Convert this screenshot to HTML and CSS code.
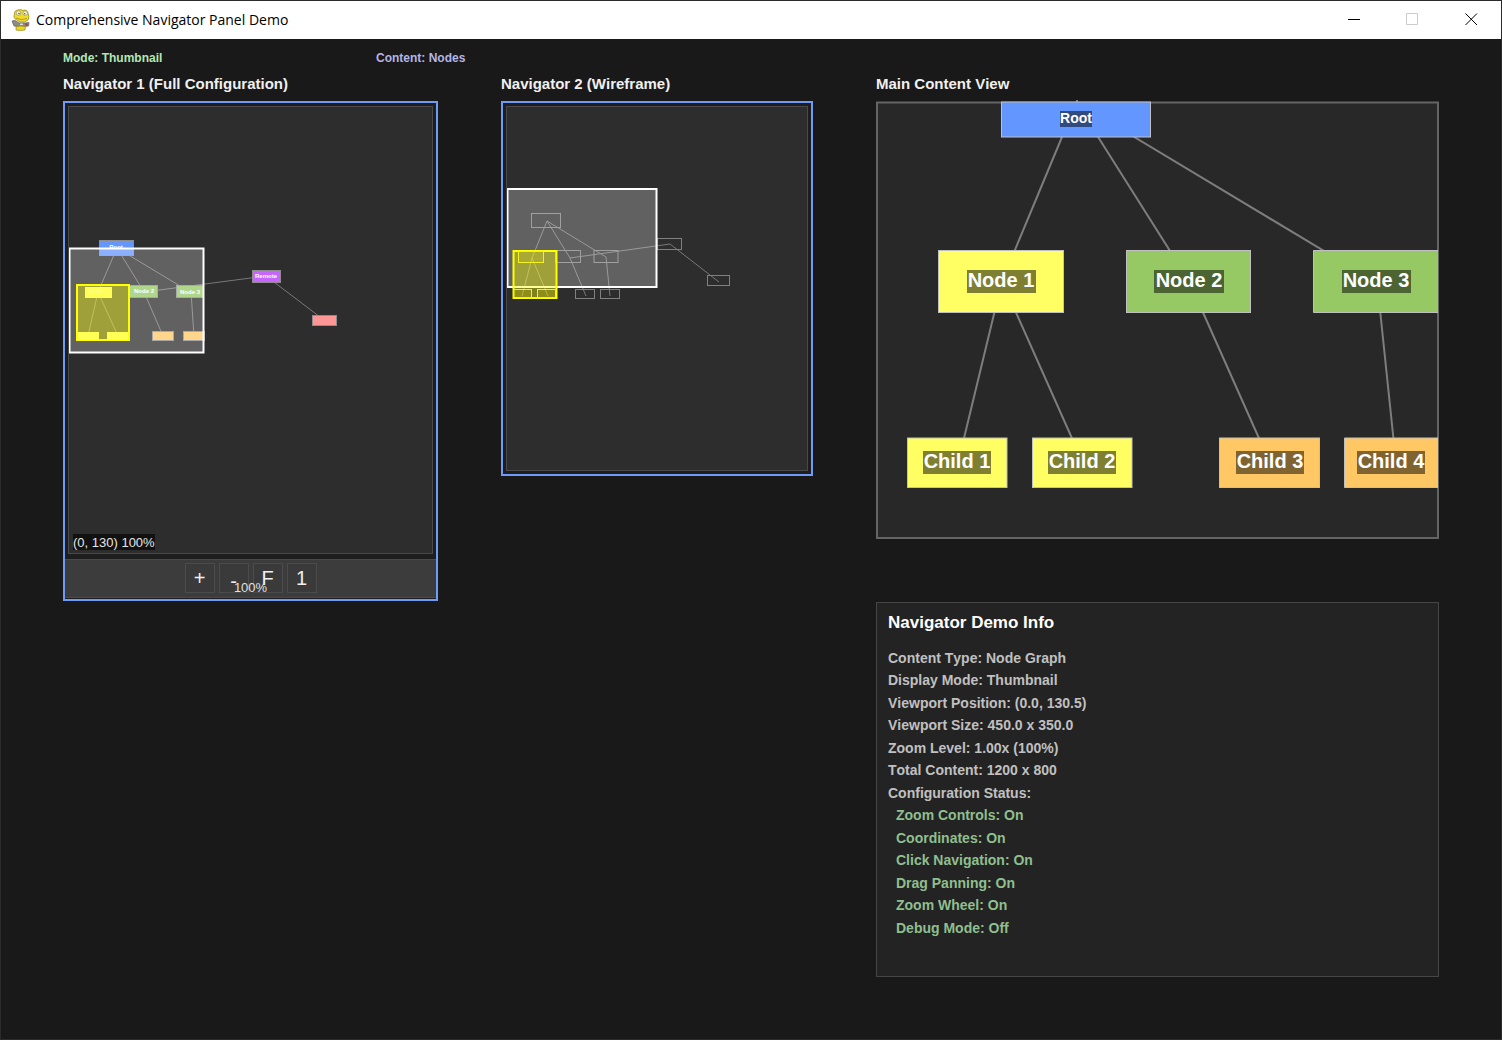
FILE: index.html
```html
<!DOCTYPE html>
<html lang="en">
<head>
<meta charset="utf-8">
<meta name="viewport" content="width=device-width, initial-scale=1">
<title>Comprehensive Navigator Panel Demo</title>
<link rel="stylesheet" href="styles.css">
</head>
<body>
<div class="window">
  <header class="titlebar">
    <svg class="app-icon" viewBox="0 0 20 22" aria-hidden="true">
      <path d="M5 10.500 Q2 9 3.500 5 Q3 1.500 7 1 Q10 0 12 1.500 Q16 0 17 4 Q19 8 17 11 Q14 14 9 13 Z" fill="#f0dc28" stroke="#8a7c1c" stroke-width=".7"/>
      <circle cx="7.500" cy="4" r="2.300" fill="#f7f7ea" stroke="#8c8450" stroke-width=".6"/>
      <circle cx="14.200" cy="4.200" r="2.300" fill="#f7f7ea" stroke="#8c8450" stroke-width=".6"/>
      <circle cx="8" cy="4.500" r=".8" fill="#555"/>
      <circle cx="13.800" cy="4.700" r=".8" fill="#555"/>
      <path d="M5 9 Q10 12 16 9.500" fill="none" stroke="#a08d14" stroke-width=".8"/>
      <path d="M1 12 L4 11.500 L8 14 L14 14 L18 13.500 L17.500 17 L13 17.500 L8 17.500 L3 17 Z" fill="#8d8d88" stroke="#5c5c58" stroke-width=".7"/>
      <path d="M9 14.500 h3 v1.500 h-3z" fill="#ddd"/>
      <circle cx="15.500" cy="15.500" r="1.200" fill="#b03a3a"/>
      <path d="M5 17.500 Q10 16.500 14.500 17.500 L14 21 Q9 22 5 21 Z" fill="#ecd51f" stroke="#8a7c1c" stroke-width=".6"/>
    </svg>
    <span class="window-title">Comprehensive Navigator Panel Demo</span>
    <div class="window-controls">
      <button type="button" aria-label="Minimize"><svg viewBox="0 0 13 13"><path d="M1 6.500H13"/></svg></button>
      <button type="button" aria-label="Maximize" disabled><svg viewBox="0 0 13 13"><path d="M.5 .5H11.500V11.500H.5Z"/></svg></button>
      <button type="button" aria-label="Close"><svg viewBox="0 0 13 13"><path d="M.5 .5 L12 12 M12 .5 L.5 12"/></svg></button>
    </div>
  </header>

  <main class="canvas">
    <div class="status">
      <span class="status-mode">Mode: Thumbnail</span>
      <span class="status-content">Content: Nodes</span>
    </div>

    <div class="columns">
      <section class="column">
        <h2>Navigator 1 (Full Configuration)</h2>
        <div class="navigator">
          <div class="map">
            <svg viewBox="69 107 363 446" role="img" aria-label="Thumbnail node map">
              <g class="edges">
                <path d="M117 248L98 292M117 248L144 292M117 248L190 292M144 292L266 276L324 320M98 292L88 336M98 292L118 336M144 292L163 336M191 292L194 336"/>
              </g>
              <g class="thumbs">
                <rect class="blue" x="99.500" y="240.500" width="34" height="15"/>
                <rect class="green" x="129.500" y="285.500" width="28" height="12"/>
                <rect class="green" x="176.500" y="285.500" width="27" height="12"/>
                <rect class="orange" x="152.500" y="331.500" width="21" height="9"/>
                <rect class="orange" x="183.500" y="331.500" width="21" height="9"/>
                <rect class="purple" x="252.500" y="270.500" width="28" height="12"/>
                <rect class="red" x="312.500" y="315.500" width="24" height="10"/>
              </g>
              <g class="thumb-text">
                <text x="116" y="249">Root</text>
                <text x="144" y="293">Node 2</text>
                <text x="190" y="294">Node 3</text>
                <text x="266" y="278">Remote</text>
              </g>
              <rect class="viewport" x="69.500" y="248.500" width="134" height="104"/>
              <rect class="selection" x="77" y="285" width="52" height="55"/>
              <g class="picked">
                <rect x="85" y="287" width="27" height="11"/>
                <rect x="78" y="332" width="21" height="8"/>
                <rect x="107" y="332" width="21" height="8"/>
              </g>
              <g class="thumb-text faint"><text x="98" y="293">Node 1</text></g>
            </svg>
            <span class="coords">(0, 130) 100%</span>
          </div>
          <div class="toolbar">
            <button type="button" aria-label="Zoom in">+</button>
            <button type="button" class="zoom-out" aria-label="Zoom out">-</button>
            <button type="button" aria-label="Fit">F</button>
            <button type="button" aria-label="Actual size">1</button>
            <span class="zoom-value">100%</span>
          </div>
        </div>
      </section>

      <section class="column">
        <h2>Navigator 2 (Wireframe)</h2>
        <div class="navigator">
          <div class="map">
            <svg viewBox="507 107 300 363" role="img" aria-label="Wireframe node map">
              <g class="edges">
                <path d="M547 221L532 258M547 221L570 258M547 221L606 257M570 258L670 244L719 282M532 258L522 296M532 258L548 296M570 258L586 296M606 257L610 296"/>
              </g>
              <g class="frames">
                <rect x="531.500" y="213.500" width="29" height="14"/>
                <rect x="518.500" y="250.500" width="25" height="12"/>
                <rect x="555.500" y="250.500" width="25" height="12"/>
                <rect x="594" y="250.500" width="24" height="12"/>
                <rect x="657.500" y="238.500" width="24" height="11"/>
                <rect x="707.500" y="275.500" width="22" height="10"/>
                <rect x="575.500" y="289.500" width="19" height="9"/>
                <rect x="600.500" y="289.500" width="19" height="9"/>
              </g>
              <rect class="viewport" x="507.500" y="189" width="149" height="98"/>
              <rect class="selection" x="513.500" y="251" width="43" height="47"/>
              <g class="picked-frames">
                <rect x="518.500" y="251.500" width="25" height="11"/>
                <rect x="513.500" y="289.500" width="18" height="8"/>
                <rect x="537.500" y="289.500" width="18" height="8"/>
              </g>
            </svg>
          </div>
        </div>
      </section>

      <section class="column">
        <h2>Main Content View</h2>
        <svg class="content-view" viewBox="876 101 563 438" role="img" aria-label="Node graph">
          <rect class="view-frame" x="877" y="102.500" width="561" height="435.500"/>
          <path class="links" d="M1077 100V102M1077 101L1002 281M1076 102L1189 281M1076 102L1374 281M1002 281L958 463M1002 281L1083 463M1189 281L1270 463M1377 281L1396 463"/>
          <g class="nodes">
            <rect class="blue" x="1001.500" y="102" width="149" height="35"/>
            <rect class="yellow" x="938.500" y="250.500" width="125" height="62"/>
            <rect class="green" x="1126.500" y="250.500" width="124" height="62"/>
            <path class="green" d="M1438 250.500H1313.500V312.500H1438"/>
            <rect class="yellow" x="907.500" y="438" width="99.500" height="49.500"/>
            <rect class="yellow" x="1032.500" y="438" width="99.500" height="49.500"/>
            <rect class="orange" x="1219.500" y="438" width="100" height="49.500"/>
            <path class="orange" d="M1438 438H1344.500V487.500H1438"/>
          </g>
          <g class="label-backs">
            <rect x="1060" y="111" width="32" height="16"/>
            <rect x="967" y="270" width="69" height="23"/>
            <rect x="1154" y="270" width="70" height="23"/>
            <rect x="1342" y="270" width="69" height="23"/>
            <rect x="923" y="451" width="68" height="23"/>
            <rect x="1048" y="451" width="68" height="23"/>
            <rect x="1236" y="451" width="68" height="23"/>
            <rect x="1357" y="451" width="68" height="23"/>
          </g>
          <g class="labels">
            <text class="small" x="1076" y="123">Root</text>
            <text x="1001" y="287">Node 1</text>
            <text x="1189" y="287">Node 2</text>
            <text x="1376" y="287">Node 3</text>
            <text x="957" y="468">Child 1</text>
            <text x="1082" y="468">Child 2</text>
            <text x="1270" y="468">Child 3</text>
            <text x="1391" y="468">Child 4</text>
          </g>
        </svg>

        <div class="info">
          <h3>Navigator Demo Info</h3>
          <ul>
            <li>Content Type: Node Graph</li>
            <li>Display Mode: Thumbnail</li>
            <li>Viewport Position: (0.0, 130.5)</li>
            <li>Viewport Size: 450.0 x 350.0</li>
            <li>Zoom Level: 1.00x (100%)</li>
            <li>Total Content: 1200 x 800</li>
            <li>Configuration Status:</li>
            <li class="on">Zoom Controls: On</li>
            <li class="on">Coordinates: On</li>
            <li class="on">Click Navigation: On</li>
            <li class="on">Drag Panning: On</li>
            <li class="on">Zoom Wheel: On</li>
            <li class="on">Debug Mode: Off</li>
          </ul>
        </div>
      </section>
    </div>
  </main>
</div>
</body>
</html>
```
FILE: styles.css
```css
* { box-sizing: border-box; }

body {
  margin: 0;
  background: #191919;
  color: #f0f0f0;
  font-family: "Liberation Sans", Arial, sans-serif;
  font-kerning: none;
}

.window {
  display: flex;
  flex-direction: column;
  min-height: 100vh;
  border: 1px solid #2b2b2b;
}

.titlebar {
  display: flex;
  align-items: center;
  height: 38px;
  padding-left: 10px;
  background: #fff;
  color: #000;
}

.app-icon { width: 20px; height: 22px; }

.window-title {
  margin-left: 5px;
  padding-bottom: 1px;
  font: 14px/20px "Open Sans", "Noto Sans", sans-serif;
}

.window-controls { display: flex; margin-left: auto; height: 100%; }

.window-controls button {
  display: grid;
  place-items: center;
  width: 59px;
  padding: 0 0 1px;
  border: 0;
  background: none;
}

.window-controls svg {
  width: 13px;
  height: 13px;
  fill: none;
  stroke: #000;
  stroke-width: 1;
}

.window-controls button:disabled svg { stroke: #ccc; }

.canvas { flex: 1; padding: 11px 62px 62px; }

.status {
  display: flex;
  font-size: 12px;
  font-weight: bold;
  line-height: 16px;
}

.status-mode { width: 313px; color: #b4e6b4; }
.status-content { color: #b4b4e6; }

.columns {
  display: grid;
  grid-template-columns: 375fr 312fr 563fr;
  gap: 63px;
  align-items: start;
  margin-top: 8px;
}

.column { min-width: 0; }

h2 {
  margin: 0 0 7px;
  font-size: 15px;
  line-height: 20px;
  white-space: nowrap;
}

.navigator {
  padding: 3px 0;
  border: 2px solid #6f9af5;
  background: #1e1e1e;
}

.map {
  position: relative;
  margin: 0 3px;
  border: 1px solid #4a4a4a;
  background: #2d2d2d;
}

.map svg, .content-view { display: block; width: 100%; height: auto; }

.edges { fill: none; stroke: #787878; stroke-width: 1; }
.thumbs rect { stroke: #8c8c8c; stroke-width: 1; }
.thumb-text { fill: #fff; font-size: 6px; font-weight: bold; text-anchor: middle; }
.faint { opacity: .25; }
.frames rect { fill: none; stroke: #808080; }
.viewport { fill: #fff; fill-opacity: .25; stroke: #fff; stroke-width: 2; }
.selection { fill: #ff0; fill-opacity: .4; stroke: #ff0; stroke-width: 2; }
.picked { fill: #ffff55; }
.picked-frames { fill: #ff0; fill-opacity: .1; stroke: #f4f41c; }

.coords {
  position: absolute;
  left: 4px;
  bottom: 3px;
  padding-top: 1px;
  background: #111;
  color: #e6e6e6;
  font-size: 13px;
  line-height: 15px;
}

.toolbar {
  position: relative;
  display: flex;
  justify-content: center;
  gap: 4px;
  margin: 5px 0 -2px;
  padding: 3px 0 4px;
  border: 1px solid #4a4a4a;
  border-width: 1px 0;
  background: #3c3c3c;
}

.toolbar button {
  width: 30px;
  height: 30px;
  padding: 0;
  border: 1px solid #4b4b4b;
  background: #3a3a3a;
  color: #f0f0f0;
  font: 20px/28px "Liberation Sans", Arial, sans-serif;
}

.toolbar .zoom-out { padding-top: 3px; }

.zoom-value {
  position: absolute;
  inset: auto 0 1px;
  color: #e0e0e0;
  font-size: 13px;
  line-height: 16px;
  text-align: center;
}

.blue { fill: #6496ff; }
.yellow { fill: #ffff64; }
.green { fill: #96c864; }
.orange { fill: #ffc864; }
.purple { fill: #c864ff; }
.red { fill: #ff9696; }

.content-view { overflow: visible; }
.view-frame { fill: #282828; stroke: #646464; stroke-width: 2; }
.links { fill: none; stroke: #7d7d7d; stroke-width: 2; }
.nodes { stroke: #c0c0c0; stroke-width: 1; }
.label-backs { fill: #000; fill-opacity: .5; }
.labels { fill: #fff; font-size: 20px; font-weight: bold; text-anchor: middle; }
.labels .small { font-size: 14px; }

.info {
  min-height: 375px;
  margin-top: 63px;
  padding: 10px 11px;
  border: 1px solid #464646;
  background: #232323;
}

h3 {
  margin: 0 0 14px;
  color: #fff;
  font-size: 17px;
  line-height: 20px;
}

.info ul {
  display: grid;
  grid-auto-rows: 22px 23px;
  margin: 0;
  padding: 0;
  list-style: none;
  color: #c0c0c0;
  font-size: 14px;
  font-weight: bold;
  line-height: 22px;
}

.info .on { padding-left: 8px; color: #8fbf8f; }
```
